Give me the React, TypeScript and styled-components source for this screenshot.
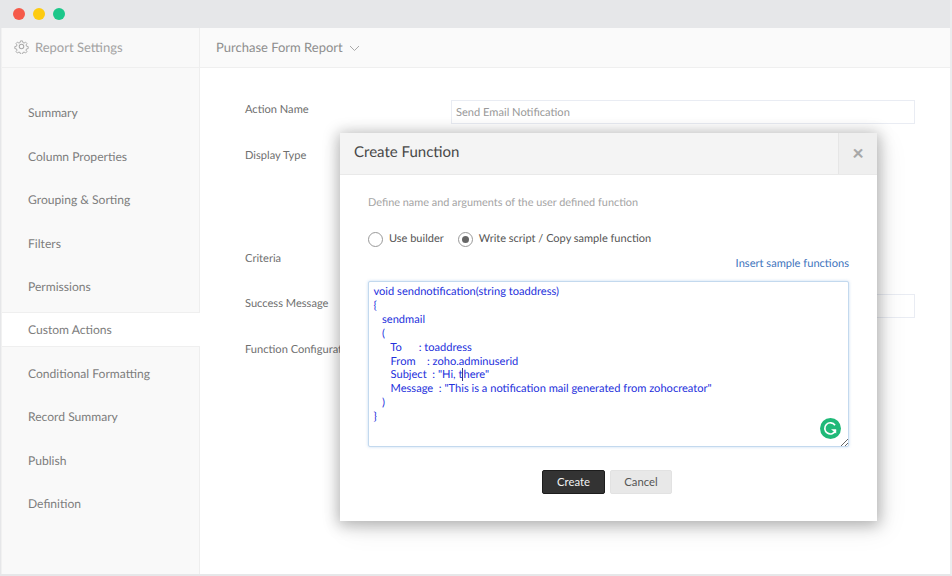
import {FC} from 'react'
import styled, {createGlobalStyle} from 'styled-components'

const NAV_ITEMS = [
  'Summary',
  'Column Properties',
  'Grouping & Sorting',
  'Filters',
  'Permissions',
  'Custom Actions',
  'Conditional Formatting',
  'Record Summary',
  'Publish',
  'Definition',
]

const GearIcon: FC = () => (
  <svg width="15" height="15" viewBox="0 0 24 24" fill="none" stroke="#a9a9a9" strokeWidth="1.7" strokeLinejoin="round">
    <path d="M10.2 2h3.6l.6 3 2.2.9 2.6-1.7 2.5 2.5-1.7 2.6.9 2.2 3 .6v3.6l-3 .6-.9 2.2 1.7 2.6-2.5 2.5-2.6-1.7-2.2.9-.6 3h-3.6l-.6-3-2.2-.9-2.6 1.7-2.5-2.5 1.7-2.6-.9-2.2-3-.6v-3.6l3-.6.9-2.2-1.7-2.6 2.5-2.5 2.6 1.7 2.2-.9z" transform="translate(1.2 1.2) scale(.9)" />
    <circle cx="12" cy="12" r="3.6" />
  </svg>
)

const GrammarlyIcon: FC = () => (
  <svg width="21" height="21" viewBox="0 0 21 21">
    <circle cx="10.5" cy="10.5" r="10.5" fill="#1fb978" />
    <path d="M15 7.2A5.6 5.6 0 1 0 15.6 12.4" fill="none" stroke="#fff" strokeWidth="1.7" />
    <path d="M11 11.2h5.2v4.4z" fill="#fff" />
  </svg>
)

const App: FC = () => (
  <>
    <GlobalStyle />
    <Window>
      <TitleBar>
        <Light $color="#f55a4a" />
        <Light $color="#fdcb10" />
        <Light $color="#1cc78a" />
      </TitleBar>
      <Body>
        <Sidebar>
          <SidebarHeader>
            <GearIcon />
            <span>Report Settings</span>
          </SidebarHeader>
          <Nav>
            {NAV_ITEMS.map(item => (
              <NavItem key={item} $active={item === 'Custom Actions'}>
                {item}
              </NavItem>
            ))}
          </Nav>
        </Sidebar>
        <Main>
          <MainHeader>
            Purchase Form Report
            <svg width="11" height="7" viewBox="0 0 11 7" fill="none" stroke="#a9a9a9" strokeWidth="1">
              <path d="M1 1l4.5 4.5L10 1" />
            </svg>
          </MainHeader>
          <Form>
            <FormRow $height={46}>
              <Label>Action Name</Label>
              <FakeInput>Send Email Notification</FakeInput>
            </FormRow>
            <FormRow $height={103}>
              <Label>Display Type</Label>
            </FormRow>
            <FormRow $height={45}>
              <Label>Criteria</Label>
            </FormRow>
            <FormRow $height={46}>
              <Label>Success Message</Label>
              <FakeInput />
            </FormRow>
            <FormRow $height={46}>
              <Label>Function Configuration</Label>
            </FormRow>
          </Form>
          <Modal>
            <ModalHeader>
              <ModalTitle>Create Function</ModalTitle>
              <CloseCell>×</CloseCell>
            </ModalHeader>
            <ModalBody>
              <Hint>Define name and arguments of the user defined function</Hint>
              <RadioRow>
                <RadioOption>
                  <Radio />
                  Use builder
                </RadioOption>
                <RadioOption>
                  <Radio $checked />
                  Write script / Copy sample function
                </RadioOption>
              </RadioRow>
              <InsertLink>Insert sample functions</InsertLink>
              <CodeBox>
                <Code>
                  {`void sendnotification(string toaddress)
{
   sendmail
   (
      To      : toaddress
      From    : zoho.adminuserid
      Subject  : "Hi, t`}
                  <Caret />
                  {`here"
      Message  : "This is a notification mail generated from zohocreator"
   )
}`}
                </Code>
                <GrammarlyBadge>
                  <GrammarlyIcon />
                </GrammarlyBadge>
                <ResizeGrip width="7" height="7" viewBox="0 0 7 7" stroke="#666" strokeWidth="1">
                  <path d="M0 7l7-7M4 7l3-3" />
                </ResizeGrip>
              </CodeBox>
              <Actions>
                <PrimaryButton>Create</PrimaryButton>
                <SecondaryButton>Cancel</SecondaryButton>
              </Actions>
            </ModalBody>
          </Modal>
        </Main>
      </Body>
    </Window>
  </>
)

const GlobalStyle = createGlobalStyle`
  html, body {
    margin: 0;
    padding: 0;
    background: #fff;
  }
  body {
    font-family: Lato, "Open Sans", sans-serif;
    text-rendering: geometricPrecision;
    overflow: hidden;
  }
  * {
    box-sizing: border-box;
  }
`
const Window = styled.div`
  width: 952px;
  height: 576px;
  display: flex;
  flex-direction: column;
  background: #fff;
  border-left: 1px solid #e6e7e9;
  border-right: 2px solid #ececee;
  border-bottom: 2px solid #e6e7e9;
  overflow: hidden;
`
const TitleBar = styled.div`
  flex: none;
  height: 28px;
  margin: 0 -2px 0 -1px;
  padding-left: 13px;
  display: flex;
  align-items: center;
  gap: 8px;
  background: #e6e7e9;
`
const Light = styled.span<{$color: string}>`
  width: 12px;
  height: 12px;
  border-radius: 50%;
  background: ${p => p.$color};
`
const Body = styled.div`
  flex: 1;
  display: flex;
  min-height: 0;
`
const Sidebar = styled.aside`
  flex: none;
  width: 199px;
  background: #f9f9f9;
  border-right: 1px solid #eeeeee;
  border-left: 1px solid #f1f1f1;
`
const SidebarHeader = styled.div`
  height: 40px;
  padding: 0 0 2px 12px;
  display: flex;
  align-items: center;
  gap: 6px;
  font-size: 13px;
  color: #a3a3a3;
  border-bottom: 1px solid #efefef;
`
const Nav = styled.nav`
  padding-top: 27.4px;
`
const NavItem = styled.div<{$active?: boolean}>`
  height: 35px;
  margin-bottom: 8.4px;
  padding-left: 26px;
  margin-right: ${p => (p.$active ? '-1px' : '0')};
  display: flex;
  align-items: center;
  font-size: 12.1px;
  color: #7d7d7d;
  background: ${p => (p.$active ? '#fff' : 'transparent')};
  border-top: 1px solid ${p => (p.$active ? '#efefef' : 'transparent')};
  border-bottom: 1px solid ${p => (p.$active ? '#efefef' : 'transparent')};
`
const Main = styled.main`
  position: relative;
  flex: 1;
  min-width: 0;
`
const MainHeader = styled.div`
  height: 40px;
  padding: 0 0 2px 16px;
  display: flex;
  align-items: center;
  gap: 6px;
  font-size: 13px;
  color: #8e8e8e;
  background: #fafafa;
  border-bottom: 1px solid #efefef;

  svg {
    margin-top: 4px;
  }
`
const Form = styled.div`
  padding: 30px 35px 0 45px;
`
const FormRow = styled.div<{$height: number}>`
  height: ${p => p.$height}px;
  display: flex;
  align-items: flex-start;
`
const Label = styled.div`
  flex: none;
  width: 206px;
  font-size: 11.1px;
  line-height: 16px;
  padding-top: 4px;
  color: #6f6f6f;
  white-space: nowrap;
`
const FakeInput = styled.div`
  flex: 1;
  height: 24px;
  margin-top: 2px;
  padding: 1px 0 0 4px;
  display: flex;
  align-items: center;
  font-size: 11.1px;
  color: #999;
  border: 1px solid #e9ecf3;
`
const Modal = styled.div`
  position: absolute;
  left: 140px;
  top: 105px;
  width: 537px;
  height: 388px;
  background: #fff;
  box-shadow: 0 2px 14px 2px rgba(0, 0, 0, 0.28), 6px 8px 26px rgba(0, 0, 0, 0.08);
`
const ModalHeader = styled.div`
  height: 42px;
  display: flex;
  align-items: stretch;
  justify-content: space-between;
  background: #f4f4f4;
  border-bottom: 1px solid #e9e9e9;
`
const ModalTitle = styled.div`
  padding: 0 0 3px 14px;
  display: flex;
  align-items: center;
  font-size: 15px;
  color: #484848;
`
const CloseCell = styled.div`
  width: 39px;
  padding-bottom: 2px;
  display: flex;
  align-items: center;
  justify-content: center;
  font-size: 20px;
  font-weight: 900;
  color: #a8a8a8;
  background: #efefef;
  border-left: 1px solid #e6e6e6;
`
const ModalBody = styled.div`
  padding: 21px 28px 0;
`
const Hint = styled.div`
  font-size: 10.9px;
  line-height: 14px;
  color: #a4a4a4;
`
const RadioRow = styled.div`
  margin-top: 21px;
  display: flex;
  gap: 14px;
`
const RadioOption = styled.label`
  display: flex;
  align-items: center;
  gap: 6px;
  font-size: 11px;
  line-height: 16px;
  color: #555;
`
const Radio = styled.span<{$checked?: boolean}>`
  position: relative;
  width: 15px;
  height: 15px;
  border-radius: 50%;
  background: #fff;
  border: 1px solid #999;

  &::after {
    content: '';
    display: ${p => (p.$checked ? 'block' : 'none')};
    position: absolute;
    inset: 3px;
    border-radius: 50%;
    background: #666;
  }
`
const InsertLink = styled.div`
  margin-top: 10px;
  text-align: right;
  font-size: 11.1px;
  line-height: 14px;
  color: #3f75bd;
`
const CodeBox = styled.div`
  position: relative;
  margin-top: 10px;
  height: 166px;
  padding: 3px 4.5px;
  background: #fff;
  border: 1px solid #c3d9ee;
  border-radius: 2px;
  box-shadow: 0 0 3px rgba(120, 170, 225, 0.45);
`
const Code = styled.pre`
  margin: 0;
  font-family: Lato, "Open Sans", sans-serif;
  font-size: 11.1px;
  line-height: 13.9px;
  color: #2430dc;
`
const Caret = styled.span`
  display: inline-block;
  width: 0;
  height: 13px;
  vertical-align: -3px;
  border-left: 1px solid #333a80;
`
const GrammarlyBadge = styled.div`
  position: absolute;
  right: 7px;
  bottom: 7px;
  line-height: 0;
`
const ResizeGrip = styled.svg`
  position: absolute;
  right: 0;
  bottom: 0;
`
const Actions = styled.div`
  margin-top: 23px;
  margin-right: 3px;
  display: flex;
  justify-content: center;
  gap: 5px;
`
const PrimaryButton = styled.button`
  width: 63px;
  height: 24px;
  padding: 0 0 1px;
  font-family: inherit;
  font-size: 11.3px;
  color: #f2f2f2;
  background: #333;
  border: 1px solid #1d1d1d;
  border-radius: 2px;
`
const SecondaryButton = styled(PrimaryButton)`
  width: 62px;
  color: #555;
  background: #e8e8e8;
  border-color: #e2e2e2;
`

export default App
